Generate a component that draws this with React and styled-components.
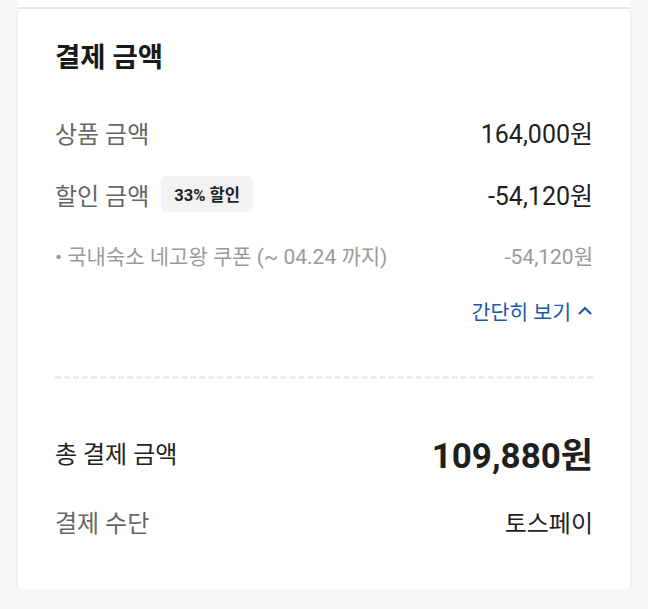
import React from "react";
import styled, { createGlobalStyle } from "styled-components";

const GlobalStyle = createGlobalStyle`
  body {
    margin: 0;
    background: #f7f7f7;
    font-family: Roboto, "Noto Sans CJK KR", sans-serif;
  }
`;

const Page = styled.div`
  padding: 0 18px;
`;

const PrevCard = styled.div`
  height: 7px;
  background: #fff;
  border-bottom: 2px solid #e6e6e6;
`;

const Card = styled.section`
  background: #fff;
  padding: 32px 37px 30px;
  box-shadow: 0 2px 3px rgba(0, 0, 0, 0.1);
`;

const Title = styled.h2`
  margin: 0 0 26px;
  font-size: 27.5px;
  line-height: 34px;
  font-weight: 700;
  color: #1a1a1a;
`;

const Row = styled.div`
  display: flex;
  align-items: center;
  justify-content: ${(p) => (p.$end ? "flex-end" : "space-between")};
  height: ${(p) => p.$h}px;
`;

const Label = styled.span`
  display: flex;
  align-items: center;
  gap: 12px;
  font-size: 24px;
  color: ${(p) => (p.$dark ? "#222" : "#666")};
`;

const Value = styled.span`
  font-size: ${(p) => (p.$big ? 35 : p.$num ? 25 : 24)}px;
  font-weight: ${(p) => (p.$big ? 700 : 400)};
  color: #1f1f1f;
`;

const Badge = styled.span`
  display: inline-flex;
  align-items: center;
  height: 36px;
  padding: 0 13px;
  border-radius: 6px;
  background: #f2f2f2;
  font-size: 16.5px;
  font-weight: 700;
  color: #222;
`;

const SubText = styled.span`
  font-size: 21px;
  color: #9a9a9a;
`;

const Toggle = styled.button`
  display: flex;
  align-items: center;
  gap: 6px;
  padding: 0;
  border: none;
  background: none;
  font-family: inherit;
  font-size: 20.5px;
  color: #1b5aab;
  cursor: pointer;
`;

const Dashed = styled.hr`
  margin: 0;
  border: none;
  border-top: 3px dashed #ececec;
`;

const Chevron = () => (
  <svg width="16" height="16" viewBox="0 0 16 16" fill="none">
    <path d="M2 11L8 5L14 11" stroke="#1b5aab" strokeWidth="2.2" />
  </svg>
);

export default function App() {
  return (
    <>
      <GlobalStyle />
      <Page>
        <PrevCard />
        <Card>
          <Title>결제 금액</Title>
          <Row $h={62}>
            <Label>상품 금액</Label>
            <Value $num>164,000원</Value>
          </Row>
          <Row $h={62}>
            <Label>
              할인 금액
              <Badge>33% 할인</Badge>
            </Label>
            <Value $num>-54,120원</Value>
          </Row>
          <Row $h={60}>
            <SubText>• 국내숙소 네고왕 쿠폰 (~ 04.24 까지)</SubText>
            <SubText>-54,120원</SubText>
          </Row>
          <Row $h={52} $end>
            <Toggle>
              간단히 보기
              <Chevron />
            </Toggle>
          </Row>
          <div style={{ height: 39 }} />
          <Dashed />
          <div style={{ height: 42 }} />
          <Row $h={62}>
            <Label $dark>총 결제 금액</Label>
            <Value $big>109,880원</Value>
          </Row>
          <Row $h={76}>
            <Label>결제 수단</Label>
            <Value>토스페이</Value>
          </Row>
        </Card>
      </Page>
    </>
  );
}
